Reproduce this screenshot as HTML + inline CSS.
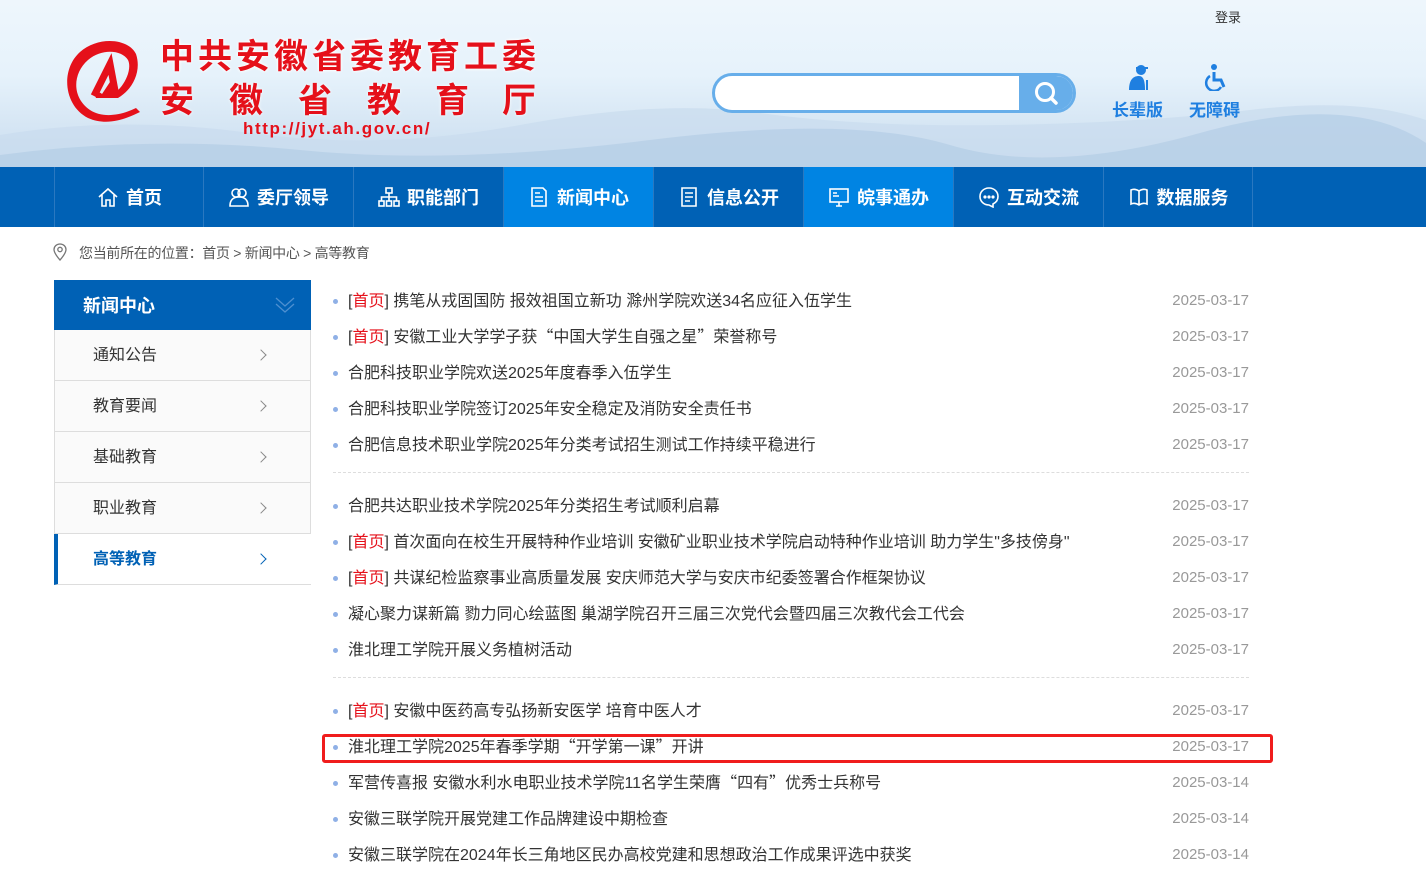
<!DOCTYPE html>
<html><head><meta charset="utf-8"><style>
*{margin:0;padding:0;box-sizing:border-box}
body{width:1426px;height:880px;overflow:hidden;background:#fff;font-family:"Liberation Sans","Noto Sans CJK SC",sans-serif;position:relative}
.hdr{position:absolute;left:0;top:0;width:1426px;height:167px;background:linear-gradient(180deg,#eef6fc 0%,#e6f2fb 45%,#d6e6f4 75%,#c7dbee 100%)}
.mtn{position:absolute;left:0;top:95px;width:1426px;height:72px}
.logo1{position:absolute;left:160px;top:34px;font-size:34px;font-weight:bold;color:#e5101a;letter-spacing:4px;font-family:"Noto Sans CJK SC",sans-serif;line-height:40px;text-shadow:0 0 3px #fff,0 0 3px #fff}
.logo2{position:absolute;left:160px;top:78px;font-size:34px;font-weight:bold;color:#e5101a;font-family:"Noto Sans CJK SC",sans-serif;line-height:40px;text-shadow:0 0 3px #fff}
.logo2 span{position:absolute;top:0}
.url{position:absolute;left:243px;top:119px;font-size:17px;font-weight:bold;color:#e5101a;font-family:"Liberation Sans",sans-serif;letter-spacing:1.6px}
.login{position:absolute;left:1215px;top:7px;font-size:13px;color:#333}
.search{position:absolute;left:712px;top:73px;width:364px;height:40px;border:3px solid #67aeea;border-radius:20px;background:#fff;overflow:hidden}
.search .btn{position:absolute;right:0;top:0;width:54px;height:34px;background:#67aeea}
.tool{position:absolute;top:96px;font-size:17px;font-weight:bold;color:#1f7fe0}
.nav{position:absolute;left:0;top:167px;width:1426px;height:60px;background:#0061b5}
.nav .it{position:absolute;top:0;width:150px;height:60px;border-left:1px solid #2a78c0;color:#fff;font-size:18px;font-weight:bold;display:flex;align-items:center;justify-content:center;gap:7px}
.nav .it.on{background:#0084e3}
.nav svg{width:22px;height:22px}
.crumb{position:absolute;left:79px;top:243px;font-size:14px;color:#555;letter-spacing:-0.3px}
.side{position:absolute;left:54px;top:280px;width:257px}
.side .h{height:50px;background:#0061b5;color:#fff;font-size:18px;font-weight:bold;padding-left:29px;line-height:52px;position:relative}
.side .i{height:51px;background:#fafafa;border:1px solid #ddd;border-top:none;font-size:16px;color:#333;padding-left:38px;line-height:52px;position:relative}
.side .i::after{content:"";position:absolute;left:202px;top:21px;width:7px;height:7px;border-right:1.5px solid #888;border-top:1.5px solid #888;transform:rotate(45deg)}
.side .i.on{background:#fff;border-left:4px solid #0061b5;border-right:none;padding-left:35px;color:#0061b5;font-weight:bold}
.side .i.on::after{border-color:#0061b5;left:199px}
.row{position:absolute;left:334px;width:915px;height:20px;font-size:16px;color:#333;line-height:20px;white-space:nowrap}
.row::before{content:"";position:absolute;left:-1px;top:7px;width:5px;height:5px;border-radius:50%;background:#8fb0e6}
.row .t{position:absolute;left:14px;top:0}
.row .t b{font-weight:normal;color:#e5101a}
.row .t i{font-style:normal;font-family:"Noto Sans CJK SC",sans-serif;line-height:1px}
.row .d{position:absolute;right:0;top:-1px;color:#999;font-size:15px}
.sep{position:absolute;left:333px;width:916px;border-top:1px dashed #ddd}
.box{position:absolute;left:322px;top:734px;width:951px;height:29px;border:3px solid #f01c1c;border-radius:3px}
</style></head><body>
<div class="hdr">
<svg class="mtn" viewBox="0 0 1426 72" preserveAspectRatio="none"><path d="M0 40 Q120 20 250 38 T520 30 T760 18 T1000 30 T1250 15 T1426 25 V72 H0Z" fill="#c9dcee" opacity=".7"/><path d="M0 60 Q150 40 300 55 T650 45 T950 50 T1200 38 T1426 48 V72 H0Z" fill="#b3cde6" opacity=".7"/></svg>
<svg style="position:absolute;left:58px;top:34px" width="92" height="92" viewBox="0 0 92 92"><path d="M78 20 C70 4 40 2 22 18 C2 36 6 72 30 84 C48 92 66 86 82 78 L78 74 C62 82 44 84 32 76 C14 64 14 40 30 26 C44 14 64 16 70 26 C74 34 68 50 58 58 L52 48 L44 60 C40 56 36 60 38 64 L60 64 C74 56 84 38 78 20Z" fill="#e5101a"/><path d="M36 62 L52 30 L58 62" stroke="#e5101a" stroke-width="7" fill="none"/></svg>
<div class="logo1">中共安徽省委教育工委</div>
<div class="logo2"><span style="left:0">安</span><span style="left:69px">徽</span><span style="left:138px">省</span><span style="left:207px">教</span><span style="left:275px">育</span><span style="left:342px">厅</span></div>
<div class="url">http://jyt.ah.gov.cn/</div>
<div class="login">登录</div>
<div class="search"><div class="btn"><svg width="54" height="34" viewBox="0 0 54 34"><circle cx="26" cy="16" r="8.5" stroke="#fff" stroke-width="3" fill="none"/><path d="M32 22 L37 27" stroke="#fff" stroke-width="3.5" stroke-linecap="round"/></svg></div></div>
<svg style="position:absolute;left:1127px;top:64px" width="24" height="26" viewBox="0 0 24 26"><circle cx="14" cy="6" r="5" fill="#1f7fe0"/><path d="M9 4 H21" stroke="#1f7fe0" stroke-width="2"/><path d="M2 26 C2 16 6 12 12 12 C16 12 18 16 18 26Z" fill="#1f7fe0"/><path d="M20 16 V26" stroke="#1f7fe0" stroke-width="2"/></svg>
<svg style="position:absolute;left:1203px;top:63px" width="26" height="28" viewBox="0 0 26 28"><circle cx="11" cy="4" r="3" fill="#1f7fe0"/><path d="M11 9 V17 H18 L21 24" stroke="#1f7fe0" stroke-width="3" fill="none"/><path d="M7 13 A8 8 0 1 0 18 24" stroke="#1f7fe0" stroke-width="2.5" fill="none"/></svg>
<div class="tool" style="left:1112px">长辈版</div>
<div class="tool" style="left:1189px">无障碍</div>
</div>
<div class="nav">
<div class="it" style="left:54px"><svg viewBox="0 0 22 22" fill="none" stroke="#fff" stroke-width="1.6"><path d="M2 11 L11 3 L20 11 M5 9 V20 H9 V14 H13 V20 H17 V9"/></svg>首页</div>
<div class="it" style="left:203px"><svg viewBox="0 0 22 22" fill="none" stroke="#fff" stroke-width="1.6"><circle cx="8" cy="7" r="4"/><circle cx="14" cy="7" r="4"/><path d="M2 20 C2 13 6 11 11 11 C16 11 20 13 20 20Z"/></svg>委厅领导</div>
<div class="it" style="left:353px"><svg viewBox="0 0 22 22" fill="none" stroke="#fff" stroke-width="1.6"><rect x="8" y="2" width="6" height="5"/><rect x="1" y="15" width="5" height="5"/><rect x="8.5" y="15" width="5" height="5"/><rect x="16" y="15" width="5" height="5"/><path d="M11 7 V11 M3.5 15 V11 H18.5 V15 M11 11 V15"/></svg>职能部门</div>
<div class="it on" style="left:503px"><svg viewBox="0 0 22 22" fill="none" stroke="#fff" stroke-width="1.6"><path d="M4 2 H15 L18 5 V20 H4Z M7 7 H12 M7 11 H15 M7 15 H15"/></svg>新闻中心</div>
<div class="it" style="left:653px"><svg viewBox="0 0 22 22" fill="none" stroke="#fff" stroke-width="1.6"><path d="M4 2 H18 V20 H4Z M7 7 H15 M7 11 H15 M7 15 H12"/></svg>信息公开</div>
<div class="it on" style="left:803px"><svg viewBox="0 0 22 22" fill="none" stroke="#fff" stroke-width="1.6"><rect x="2" y="3" width="18" height="13"/><path d="M5 7 H9 M5 10 H11 M8 20 H14 M11 16 V20"/></svg>皖事通办</div>
<div class="it" style="left:953px"><svg viewBox="0 0 22 22" fill="none" stroke="#fff" stroke-width="1.6"><path d="M11 2 C5.5 2 2 6 2 10.5 C2 15 5.5 19 11 19 L15 21 V18 C18 16.5 20 14 20 10.5 C20 6 16.5 2 11 2Z"/><circle cx="7" cy="11" r=".8" fill="#fff"/><circle cx="11" cy="11" r=".8" fill="#fff"/><circle cx="15" cy="11" r=".8" fill="#fff"/></svg>互动交流</div>
<div class="it" style="left:1103px;border-right:1px solid #2a78c0"><svg viewBox="0 0 22 22" fill="none" stroke="#fff" stroke-width="1.6"><path d="M11 5 C8 3 5 3 3 4 V18 C5 17 8 17 11 19 C14 17 17 17 19 18 V4 C17 3 14 3 11 5Z M11 5 V19"/></svg>数据服务</div>
</div>
<svg style="position:absolute;left:53px;top:243px" width="14" height="18" viewBox="0 0 14 18"><path d="M7 1 C3.5 1 1 3.5 1 6.5 C1 10.5 7 17 7 17 C7 17 13 10.5 13 6.5 C13 3.5 10.5 1 7 1Z" stroke="#777" stroke-width="1.3" fill="none"/><circle cx="7" cy="6.5" r="2.2" stroke="#777" stroke-width="1.3" fill="none"/></svg>
<div class="crumb">您当前所在的位置：首页 &gt; 新闻中心 &gt; 高等教育</div>
<div class="side">
<div class="h">新闻中心<svg style="position:absolute;left:221px;top:16px" width="20" height="18" viewBox="0 0 20 18" fill="none" stroke="#4d8fd0" stroke-width="1.3"><path d="M1 2 L10 10 L19 2 M1 8 L10 16 L19 8"/></svg></div>
<div class="i">通知公告</div>
<div class="i">教育要闻</div>
<div class="i">基础教育</div>
<div class="i">职业教育</div>
<div class="i on">高等教育</div>
</div>
<div class="row" style="top:292px"><span class="t">[<b>首页</b>] 携笔从戎固国防 报效祖国立新功 滁州学院欢送34名应征入伍学生</span><span class="d">2025-03-17</span></div>
<div class="row" style="top:328px"><span class="t">[<b>首页</b>] 安徽工业大学学子获<i>“</i>中国大学生自强之星<i>”</i>荣誉称号</span><span class="d">2025-03-17</span></div>
<div class="row" style="top:364px"><span class="t">合肥科技职业学院欢送2025年度春季入伍学生</span><span class="d">2025-03-17</span></div>
<div class="row" style="top:400px"><span class="t">合肥科技职业学院签订2025年安全稳定及消防安全责任书</span><span class="d">2025-03-17</span></div>
<div class="row" style="top:436px"><span class="t">合肥信息技术职业学院2025年分类考试招生测试工作持续平稳进行</span><span class="d">2025-03-17</span></div>
<div class="sep" style="top:472px"></div>
<div class="row" style="top:497px"><span class="t">合肥共达职业技术学院2025年分类招生考试顺利启幕</span><span class="d">2025-03-17</span></div>
<div class="row" style="top:533px"><span class="t">[<b>首页</b>] 首次面向在校生开展特种作业培训 安徽矿业职业技术学院启动特种作业培训 助力学生"多技傍身"</span><span class="d">2025-03-17</span></div>
<div class="row" style="top:569px"><span class="t">[<b>首页</b>] 共谋纪检监察事业高质量发展 安庆师范大学与安庆市纪委签署合作框架协议</span><span class="d">2025-03-17</span></div>
<div class="row" style="top:605px"><span class="t">凝心聚力谋新篇 勠力同心绘蓝图 巢湖学院召开三届三次党代会暨四届三次教代会工代会</span><span class="d">2025-03-17</span></div>
<div class="row" style="top:641px"><span class="t">淮北理工学院开展义务植树活动</span><span class="d">2025-03-17</span></div>
<div class="sep" style="top:677px"></div>
<div class="row" style="top:702px"><span class="t">[<b>首页</b>] 安徽中医药高专弘扬新安医学 培育中医人才</span><span class="d">2025-03-17</span></div>
<div class="row" style="top:738px"><span class="t">淮北理工学院2025年春季学期<i>“</i>开学第一课<i>”</i>开讲</span><span class="d">2025-03-17</span></div>
<div class="row" style="top:774px"><span class="t">军营传喜报 安徽水利水电职业技术学院11名学生荣膺<i>“</i>四有<i>”</i>优秀士兵称号</span><span class="d">2025-03-14</span></div>
<div class="row" style="top:810px"><span class="t">安徽三联学院开展党建工作品牌建设中期检查</span><span class="d">2025-03-14</span></div>
<div class="row" style="top:846px"><span class="t">安徽三联学院在2024年长三角地区民办高校党建和思想政治工作成果评选中获奖</span><span class="d">2025-03-14</span></div>
<div class="box"></div>
</body></html>
